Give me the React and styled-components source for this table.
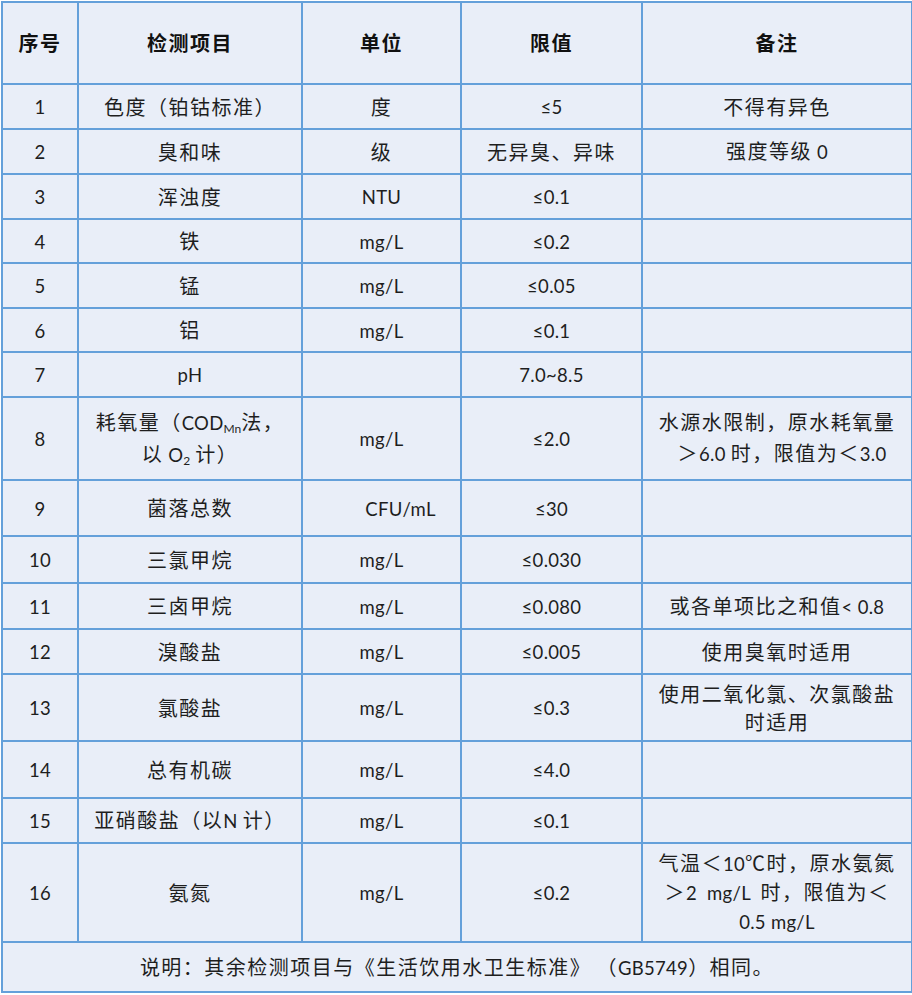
import React from "react";
import styled, { createGlobalStyle } from "styled-components";

const Global = createGlobalStyle`
  html, body { margin: 0; padding: 0; background: #ffffff; }
  body { font-family: "Lato", "Noto Sans CJK SC", sans-serif; color: #1e1e1e; }
`;

const Page = styled.div`
  padding: 1px 0 0 1px;
  width: 912px;
  box-sizing: border-box;
`;

const Table = styled.table`
  border-collapse: collapse;
  table-layout: fixed;
  width: 910px;
  background: #e9eef8;
  font-size: 20px;
  letter-spacing: 1.5px;
`;

const Row = styled.tr`
  height: ${(p) => p.$h}px;
`;

const Cell = styled.td`
  border: 2px solid #64a0da;
  padding: 0 4px;
  text-align: center;
  vertical-align: middle;
  line-height: ${(p) => p.$lh || 28}px;
  font-weight: 400;
  white-space: nowrap;
  padding-left: ${(p) => (p.$shift ? p.$shift + 4 : 4)}px;
`;

const HeadCell = styled(Cell).attrs({ as: "th" })`
  font-weight: 700;
  color: #111;
`;

const Lat = styled.span`
  font-size: 18.5px;
  letter-spacing: 0.3px;
`;

const Sub = styled.sub`
  font-size: 12px;
  vertical-align: -3px;
  line-height: 0;
  letter-spacing: 0;
`;

const mix = (s) =>
  s
    .split(/([A-Za-z0-9.~≤<\/ ]+)/)
    .filter((p) => p !== "")
    .map((p, i) =>
      /^[A-Za-z0-9.~≤<\/ ]+$/.test(p) ? <Lat key={i}>{p}</Lat> : <React.Fragment key={i}>{p}</React.Fragment>
    );

const widths = [76, 224, 159, 181, 270];

const rows = [
  { h: 45, c: ["1", "色度（铂钴标准）", "度", "≤5", "不得有异色"] },
  { h: 45, c: ["2", "臭和味", "级", "无异臭、异味", "强度等级 0"] },
  { h: 45, c: ["3", "浑浊度", "NTU", "≤0.1", ""] },
  { h: 44, c: ["4", "铁", "mg/L", "≤0.2", ""] },
  { h: 45, c: ["5", "锰", "mg/L", "≤0.05", ""] },
  { h: 44, c: ["6", "铝", "mg/L", "≤0.1", ""] },
  { h: 45, c: ["7", "pH", "", "7.0~8.5", ""] },
  {
    h: 83,
    c: [
      "8",
      <>
        耗氧量（<Lat>COD</Lat>
        <Sub>Mn</Sub>法，
        <br />
        以<Lat> O</Lat>
        <Sub>2</Sub>
        <Lat> </Lat>计）
      </>,
      "mg/L",
      "≤2.0",
      <>
        水源水限制，原水耗氧量
        <br />
        <Lat>&nbsp; </Lat>＞{mix("6.0 ")}时，限值为＜<Lat>3.0</Lat>
      </>,
    ],
  },
  { h: 56, c: ["9", "菌落总数", "CFU/mL", "≤30", ""], shift: [0, 0, 38, 0, 0] },
  { h: 47, c: ["10", "三氯甲烷", "mg/L", "≤0.030", ""] },
  { h: 46, c: ["11", "三卤甲烷", "mg/L", "≤0.080", "或各单项比之和值< 0.8"] },
  { h: 45, c: ["12", "溴酸盐", "mg/L", "≤0.005", "使用臭氧时适用"] },
  {
    h: 67,
    c: [
      "13",
      "氯酸盐",
      "mg/L",
      "≤0.3",
      <>
        使用二氧化氯、次氯酸盐
        <br />
        时适用
      </>,
    ],
  },
  { h: 57, c: ["14", "总有机碳", "mg/L", "≤4.0", ""] },
  { h: 45, c: ["15", "亚硝酸盐（以N 计）", "mg/L", "≤0.1", ""] },
  {
    h: 99,
    c: [
      "16",
      "氨氮",
      "mg/L",
      "≤0.2",
      <>
        气温＜<Lat>10</Lat>℃时，原水氨氮
        <br />
        ＞<Lat>2&nbsp; mg/L&nbsp; </Lat>时，限值为＜
        <br />
        <Lat>0.5 mg/L</Lat>
      </>,
    ],
  },
];

export default function App() {
  return (
    <Page>
      <Global />
      <Table>
        <colgroup>
          {widths.map((w, i) => (
            <col key={i} style={{ width: w }} />
          ))}
        </colgroup>
        <thead>
          <Row $h={82}>
            <HeadCell>序号</HeadCell>
            <HeadCell>检测项目</HeadCell>
            <HeadCell>单位</HeadCell>
            <HeadCell>限值</HeadCell>
            <HeadCell>备注</HeadCell>
          </Row>
        </thead>
        <tbody>
          {rows.map((r, i) => (
            <Row key={i} $h={r.h}>
              {r.c.map((t, j) => (
                <Cell
                  key={j}
                  $lh={i === 7 && (j === 1 || j === 4) ? 31 : 28}
                  $shift={r.shift ? r.shift[j] : 0}
                >
                  {typeof t === "string" ? mix(t) : t}
                </Cell>
              ))}
            </Row>
          ))}
          <Row $h={50}>
            <Cell colSpan={5}>
              {mix("说明：其余检测项目与《生活饮用水卫生标准》 （GB5749）相同。")}
            </Cell>
          </Row>
        </tbody>
      </Table>
    </Page>
  );
}
